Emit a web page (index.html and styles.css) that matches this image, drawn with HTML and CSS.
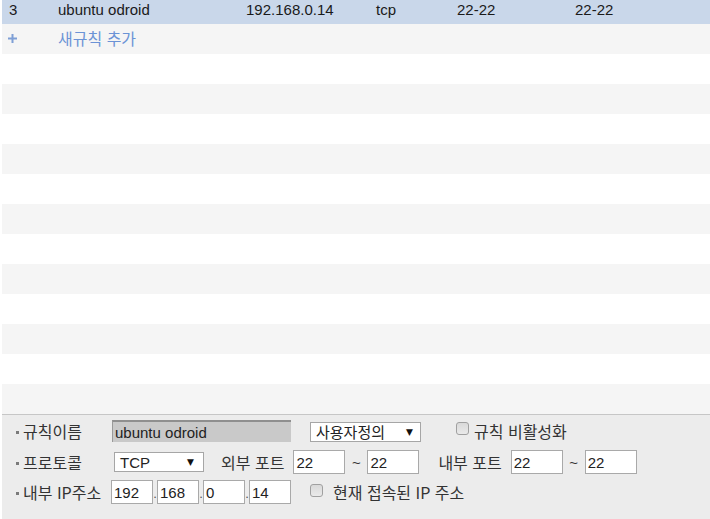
FILE: index.html
```html
<!DOCTYPE html>
<html lang="ko">
<head>
<meta charset="utf-8">
<link rel="stylesheet" href="styles.css">
</head>
<body>
<div class="wrap">
  <div class="rules">
    <div class="row selected">
      <span>3</span><span>ubuntu odroid</span><span>192.168.0.14</span><span>tcp</span><span>22-22</span><span>22-22</span>
    </div>
    <div class="row add">
      <span class="plus"><svg width="9" height="9" viewBox="0 0 9 9"><rect x="3.5" y="0" width="2" height="9" fill="#7f9fd6"/><rect x="0" y="3.5" width="9" height="2" fill="#7f9fd6"/></svg></span><span class="addtext">새규칙 추가</span>
    </div>
    <div class="row"></div><div class="row"></div>
    <div class="row"></div><div class="row"></div>
    <div class="row"></div><div class="row"></div>
    <div class="row"></div><div class="row"></div>
    <div class="row"></div><div class="row"></div>
    <div class="row"></div><div class="row"></div>
  </div>
  <div class="panel">
    <div class="frow first">
      <div class="label"><i class="dot"></i>규칙이름</div>
      <input class="name" type="text" value="ubuntu odroid" readonly>
      <div class="select sel-custom"><span>사용자정의</span><span class="arrow">▼</span></div>
      <label class="check chk-disable"><span class="box"></span>규칙 비활성화</label>
    </div>
    <div class="frow">
      <div class="label"><i class="dot"></i>프로토콜</div>
      <div class="select sel-proto"><span>TCP</span><span class="arrow">▼</span></div>
      <span class="txt ext">외부 포트</span>
      <input class="port" type="text" value="22">
      <span class="tilde">~</span>
      <input class="port" type="text" value="22">
      <span class="txt int">내부 포트</span>
      <input class="port" type="text" value="22">
      <span class="tilde">~</span>
      <input class="port" type="text" value="22">
    </div>
    <div class="frow">
      <div class="label ip-label"><i class="dot"></i>내부 IP주소</div>
      <input class="ip" type="text" value="192"><span class="ipdot">.</span>
      <input class="ip" type="text" value="168"><span class="ipdot">.</span>
      <input class="ip" type="text" value="0"><span class="ipdot">.</span>
      <input class="ip" type="text" value="14">
      <label class="check chk-cur"><span class="box"></span>현재 접속된 IP 주소</label>
    </div>
  </div>
</div>
</body>
</html>
```
FILE: styles.css
```css
html, body {
  margin: 0;
  padding: 0;
  background: #ffffff;
}
body {
  font-family: "Liberation Sans", Arial, "Noto Sans CJK KR", sans-serif;
  font-size: 15px;
  color: #222222;
  overflow: hidden;
  height: 519px;
}
.wrap {
  margin-left: 2px;
}
.rules {
  display: flex;
  flex-direction: column;
}
.row {
  height: 30px;
  display: grid;
  grid-template-columns: 49px 188px 130px 81px 118px 1fr;
  align-items: center;
  padding-left: 7px;
  background: #ffffff;
}
.row:nth-child(even) {
  background: #f5f5f5;
}
.row.selected {
  box-sizing: border-box;
  height: 24px;
  background: #c9d7ea;
  color: #1a1a1a;
  line-height: 18px;
  padding-bottom: 5px;
}
.row.add {
  background: #f5f5f5;
}
.plus {
  display: flex;
  margin-left: -1px;
  margin-top: -2px;
}
.addtext {
  color: #6b93d6;
  font-family: "Noto Sans CJK KR", sans-serif;
  font-size: 16px;
  margin-top: -2px;
}
.panel {
  border-top: 1px solid #c6c6c6;
  background: #ececec;
  height: 110px;
}
.frow {
  height: 30px;
  display: flex;
  align-items: center;
}
.frow.first {
  height: 32px;
}
.label {
  width: 110px;
  display: flex;
  align-items: center;
  font-family: "Noto Sans CJK KR", sans-serif;
  font-size: 16px;
  color: #333333;
  box-sizing: border-box;
  padding-left: 14px;
}
.ip-label {
  width: 109px;
}
.dot {
  width: 3px;
  height: 3px;
  background: #7a7a7a;
  margin-right: 4px;
  margin-top: 2px;
}
input {
  box-sizing: border-box;
  margin: 0;
  border: 1px solid #a9a9a9;
  background: #ffffff;
  font-family: "Liberation Sans", Arial, sans-serif;
  font-size: 15px;
  color: #222222;
  padding: 0 2px;
  height: 24px;
  outline: none;
}
.name {
  width: 179px;
  height: 22px;
  background: #c9c9c9;
  border: none;
  border-top: 2px solid #8f8f8f;
  border-left: 1px solid #9a9a9a;
  padding: 0 2px;
  color: #222222;
}
.select {
  box-sizing: border-box;
  height: 20px;
  background: #ffffff;
  border: 1px solid #a6a6a6;
  display: flex;
  align-items: center;
  justify-content: space-between;
  padding: 0 7px 0 5px;
  font-size: 15px;
}
.select .arrow {
  font-family: "DejaVu Sans", sans-serif;
  font-size: 9px;
  color: #111111;
}
.sel-custom {
  width: 111px;
  margin-left: 19px;
  margin-top: 1px;
  font-family: "Noto Sans CJK KR", sans-serif;
  font-size: 15px;
}
.sel-proto {
  width: 90px;
  margin-left: 2px;
  padding-right: 9px;
}
.check {
  display: flex;
  align-items: center;
  font-family: "Noto Sans CJK KR", sans-serif;
  font-size: 16px;
  color: #333333;
}
.box {
  width: 13px;
  height: 13px;
  box-sizing: border-box;
  border: 1px solid #a0a0a0;
  border-radius: 3px;
  background: linear-gradient(#d9d9d9, #eaeaea);
}
.chk-disable {
  margin-left: 35px;
}
.chk-disable .box {
  margin-right: 5px;
  margin-top: -5px;
}
.chk-cur {
  margin-left: 19px;
}
.chk-cur .box {
  margin-right: 10px;
  margin-top: -4px;
}
.txt {
  font-family: "Noto Sans CJK KR", sans-serif;
  font-size: 16px;
  color: #333333;
}
.ext {
  margin-left: 17px;
  margin-right: 9px;
}
.int {
  margin-left: 19px;
  margin-right: 9px;
}
.port {
  width: 52px;
}
.tilde {
  width: 22px;
  text-align: center;
  color: #333333;
}
.ip {
  width: 42px;
}
.ipdot {
  width: 4px;
  text-align: center;
  font-size: 13px;
  color: #555555;
  align-self: flex-end;
  margin-bottom: 6px;
}
```
